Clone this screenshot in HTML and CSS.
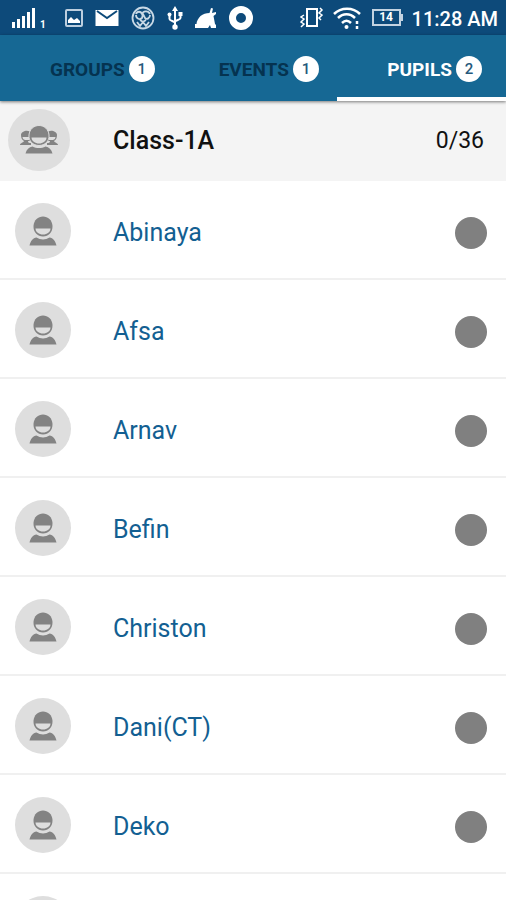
FILE: index.html
```
<!DOCTYPE html>
<html lang="en">
<head>
<meta charset="utf-8">
<meta name="viewport" content="width=device-width, initial-scale=1">
<title>Pupils</title>
<link rel="stylesheet" href="styles.css">
</head>
<body>
<svg class="defs" aria-hidden="true">
  <symbol id="pupil" viewBox="0 0 28 30">
    <path d="M4.500 10C5 4 9 0.500 14 0.500S23 4 23.500 10c.3 6-4 10.500-9.500 10.500S4.200 16 4.500 10z"/>
    <path d="M6.500 12.500h15c0 3.500-3.500 6-7.500 6s-7.500-2.500-7.500-6z" fill="#dedede"/>
    <path d="M0.500 29.500C1.500 25 4 22 7.500 21.500c4 2.500 9 2.500 13 0 3.500.5 6 3.500 7 8z"/>
  </symbol>
  <symbol id="class" viewBox="0 0 40 30">
    <path d="M2 10c0-4 8-6 10-2v8H9c0 2 1.500 2 3 2v2H1c0-2 3-2 4-4-2-1-3-3-3-6z"/>
    <path d="M38 10c0-4-8-6-10-2v8h3c0 2-1.500 2-3 2v2h11c0-2-3-2-4-4 2-1 3-3 3-6z"/>
    <path d="M3.500 12H10v3H6c-1.500-.5-2.500-1.500-2.500-3zM36.500 12H30v3h4c1.500-.5 2.500-1.500 2.500-3z" fill="#dedede"/>
    <path d="M10 10C10.500 4 15 0.500 20 0.500S29.500 4 30 10c.6 6-4 10.500-10 10.500S9.400 16 10 10z" stroke="#dedede"/>
    <path d="M12.500 12.500h15c0 3.500-3.700 6-7.500 6s-7.500-2.500-7.500-6z" fill="#dedede"/>
    <path d="M6.500 28.500c1-4 3.500-6.500 7-7 4 2 9 2 13 0 3.500.5 6 3 7 7z"/>
  </symbol>
</svg>
<div class="app">
  <div class="status">
    <div class="status-left">
      <div class="signal">
        <svg width="24" height="22" viewBox="0 0 24 22" fill="#fff"><path d="M0 15h3v6H0zM5 12h3v9H5zM10 9h3v12h-3zM15 5h3v16h-3zM20 1h3v20h-3z"/></svg>
        <span class="sim">1</span>
      </div>
      <svg width="18" height="18" viewBox="0 0 18 18"><rect x="1" y="1" width="16" height="16" rx="1" fill="none" stroke="#bdcfdf" stroke-width="2"/><path d="M3 14v-3l3-3 3 3 3-2 3 3v2z" fill="#fff"/></svg>
      <svg width="24" height="18" viewBox="0 0 24 18"><path d="M0.500 1h23v16h-23z" fill="#fff"/><path d="M2 2l10 7 10-7" fill="none" stroke="#0d4a7a" stroke-width="2"/></svg>
      <svg width="24" height="24" viewBox="0 0 24 24" fill="none" stroke="#c8d8e5"><circle cx="12" cy="12" r="10.500" stroke-width="1.800"/><path d="M5 8c1-3 5-3 6 0 1-3 6-4 8 0M5 9c0 4 4 5 6 3l1-4 2 4c2 2 5 0 5-3M6 16l3 4 3-4 3 4 3-4M9 14l3 2 3-2" stroke-width="1.800"/></svg>
      <svg width="16" height="24" viewBox="0 0 16 24" fill="none" stroke="#fff" stroke-width="2"><path d="M8 3v18M2.500 9v4c0 2 5.500 2 5.500 4M13.500 9v3c0 2-5.500 2-5.500 4"/><path d="M8 0l3 5H5zM11.500 6h4v4h-4z" fill="#fff" stroke="none"/><circle cx="2.500" cy="8.500" r="2" fill="#fff" stroke="none"/><circle cx="8" cy="21" r="2.700" fill="#fff" stroke="none"/></svg>
      <svg width="22" height="22" viewBox="0 0 22 22" fill="#fff"><path d="M0 21v-4h1.500c0-3 2-6 4-8C8 7 11 6 14.500 6L16 1l2 .5L17 6l4-1v2l-2.500 2L20 17l1 1v3h-5l-1-3-2 3z"/></svg>
      <svg width="24" height="24" viewBox="0 0 24 24"><circle cx="12" cy="12" r="8.500" fill="none" stroke="#fff" stroke-width="7"/></svg>
    </div>
    <div class="status-right">
      <svg width="24" height="22" viewBox="0 0 24 22" fill="none" stroke="#fff" stroke-width="2"><path d="M7 2h10v17H7z"/><path d="M4 8L1 10l3 2-3 3 3 2-3 3M20 1l2 2-3 3 3 2-3 3 2 2" stroke-width="1.500"/></svg>
      <svg width="28" height="24" viewBox="0 0 28 24" fill="none" stroke="#fff" stroke-width="2.500"><path d="M1 8c7-7 19-7 26 0M5 12c5-5 12-5 17 0M9 17c3-3 6-3 9 0"/><circle cx="13.500" cy="21" r="2" fill="#fff" stroke="none"/><path d="M24 15v3M24 20v3"/></svg>
      <span class="battery">14</span>
      <span class="clock">11:28 AM</span>
    </div>
  </div>
  <nav class="tabs">
    <a class="tab" href="#groups">GROUPS <span class="badge">1</span></a>
    <a class="tab" href="#events">EVENTS <span class="badge">1</span></a>
    <a class="tab active" href="#pupils" aria-current="page">PUPILS <span class="badge">2</span></a>
  </nav>
  <header class="class-row">
    <span class="avatar large"><svg width="40" height="30"><use href="#class"/></svg></span>
    <h1>Class-1A</h1>
    <span class="count">0/36</span>
  </header>
  <ul class="pupils">
    <li><label class="pupil"><span class="avatar"><svg width="28" height="30"><use href="#pupil"/></svg></span><span class="name">Abinaya</span><input type="checkbox"></label></li>
    <li><label class="pupil"><span class="avatar"><svg width="28" height="30"><use href="#pupil"/></svg></span><span class="name">Afsa</span><input type="checkbox"></label></li>
    <li><label class="pupil"><span class="avatar"><svg width="28" height="30"><use href="#pupil"/></svg></span><span class="name">Arnav</span><input type="checkbox"></label></li>
    <li><label class="pupil"><span class="avatar"><svg width="28" height="30"><use href="#pupil"/></svg></span><span class="name">Befin</span><input type="checkbox"></label></li>
    <li><label class="pupil"><span class="avatar"><svg width="28" height="30"><use href="#pupil"/></svg></span><span class="name">Christon</span><input type="checkbox"></label></li>
    <li><label class="pupil"><span class="avatar"><svg width="28" height="30"><use href="#pupil"/></svg></span><span class="name">Dani(CT)</span><input type="checkbox"></label></li>
    <li><label class="pupil"><span class="avatar"><svg width="28" height="30"><use href="#pupil"/></svg></span><span class="name">Deko</span><input type="checkbox"></label></li>
    <li><div class="pupil"><span class="avatar"><svg width="28" height="30"><use href="#pupil"/></svg></span></div></li>
  </ul>
</div>
</body>
</html>
```
FILE: styles.css
```
* {
  box-sizing: border-box;
}

body {
  margin: 0;
  background: #fff;
  font-family: Roboto, "Liberation Sans", sans-serif;
}

.defs {
  display: none;
}

.app {
  display: flex;
  flex-direction: column;
  height: 100vh;
  overflow: hidden;
}

.status {
  display: flex;
  flex: none;
  align-items: center;
  justify-content: space-between;
  height: 35px;
  padding: 0 8px 0 12px;
  background: #0d4a7a;
  color: #fff;
}

.status-left,
.status-right {
  display: flex;
  align-items: center;
}

.status-left {
  gap: 12px;
}

.status-right {
  gap: 9px;
}

.signal {
  display: flex;
  align-items: flex-end;
  gap: 4px;
  width: 41px;
}

.sim {
  font-size: 10px;
  font-weight: 700;
  line-height: 8px;
}

.battery {
  position: relative;
  width: 29px;
  height: 17px;
  margin: 0 2px;
  border: 2px solid #c3d3e1;
  font-size: 12px;
  font-weight: 700;
  line-height: 13px;
  text-align: center;
}

.battery::after {
  content: "";
  position: absolute;
  top: 3px;
  right: -4px;
  width: 2px;
  height: 7px;
  background: #c3d3e1;
}

.clock {
  padding-top: 2px;
  font-size: 20px;
  font-weight: 500;
}

.tabs {
  position: relative;
  display: grid;
  flex: none;
  grid-template-columns: repeat(3, 1fr);
  height: 66px;
  background: #166894;
  box-shadow: 0 1px 3px rgba(0, 0, 0, 0.5);
}

.tab {
  display: flex;
  align-items: center;
  gap: 4px;
  padding: 6px 0 0 50px;
  border-bottom: 4px solid transparent;
  color: #053350;
  font-size: 19px;
  font-weight: 700;
  text-decoration: none;
}

.tab.active {
  border-color: #fff;
  color: #fff;
}

.badge {
  width: 26px;
  height: 26px;
  border-radius: 50%;
  background: #fff;
  color: #26597c;
  font-size: 15px;
  font-weight: 500;
  line-height: 27px;
  text-align: center;
}

.class-row {
  display: flex;
  flex: none;
  align-items: center;
  height: 80px;
  padding: 0 22px 2px 8px;
  background: #f4f4f4;
  color: #111;
}

.class-row h1 {
  flex: 1;
  margin: 0 0 0 43px;
  font-size: 25px;
  font-weight: 500;
}

.count {
  font-size: 23px;
}

.avatar {
  display: flex;
  flex: none;
  align-items: center;
  justify-content: center;
  width: 56px;
  height: 56px;
  border-radius: 50%;
  background: #dedede;
  fill: #838383;
}

.avatar.large {
  width: 62px;
  height: 62px;
}

.pupils {
  margin: 0;
  padding: 0;
  list-style: none;
}

.pupil {
  display: flex;
  align-items: center;
  height: 99px;
  padding: 3px 19px 0 15px;
  border-bottom: 2px solid #f0f0f0;
}

.name {
  flex: 1;
  margin-left: 42px;
  padding-top: 2px;
  color: #135f92;
  font-size: 25px;
}

.pupil input {
  width: 32px;
  height: 32px;
  margin: 4px 0 0;
  border-radius: 50%;
  appearance: none;
  background: #808080;
}
```
